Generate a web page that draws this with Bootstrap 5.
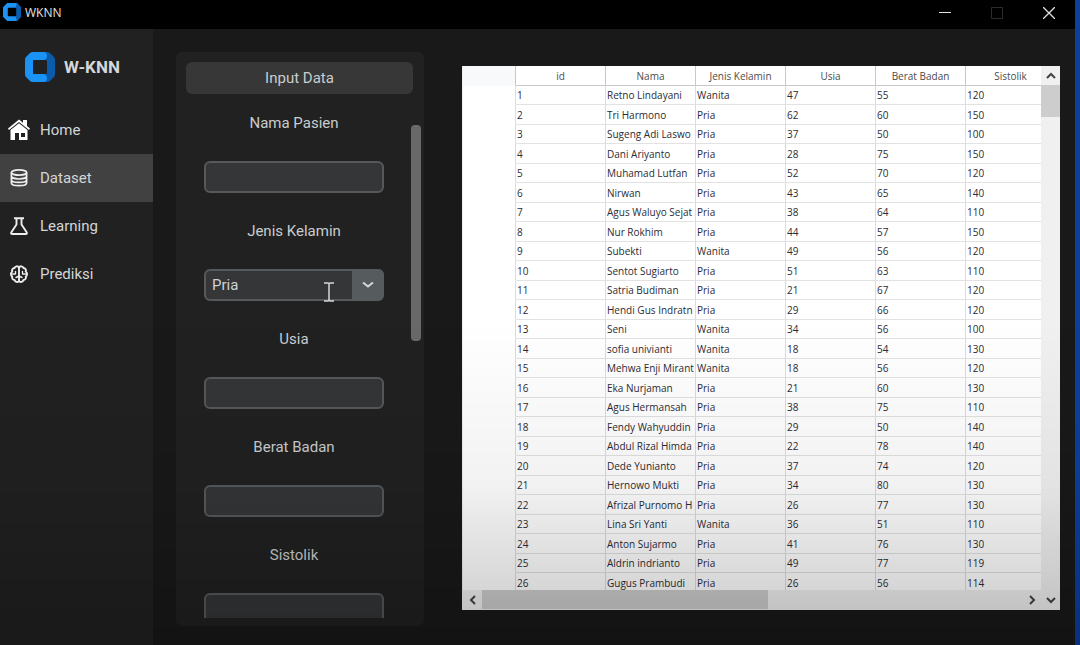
<!DOCTYPE html>
<html lang="id">
<head>
<meta charset="utf-8">
<meta name="viewport" content="width=device-width, initial-scale=1">
<title>WKNN</title>
<link href="https://cdn.jsdelivr.net/npm/bootstrap@5.3.0/dist/css/bootstrap.min.css" rel="stylesheet">
<style>
  body { font-family: Roboto, "Liberation Sans", sans-serif; font-size: 15px; line-height: 20px; color: #c9ccce; background: #191919; border-right: 5px solid #0b409c; }
  .shade { position: fixed; inset: 0; z-index: 10; pointer-events: none; background: linear-gradient(rgba(0,0,0,0) 50%, rgba(0,0,0,.05) 75%, rgba(0,0,0,.22) 100%); }
  .titlebar { height: 29px; background: #000; }
  .titlebar svg.mark-small { margin: 3px 4px 0 3px; }
  .titlebar h1 { margin-top: 5px; font: 12px/16px "Open Sans", sans-serif; color: #e4e4e4; }
  .winbtn { width: 52px; height: 24px; background: none; color: #e0e0e0; }
  .winbtn:disabled { color: #2c2c2c; }
  .sidebar { width: 153px; background: #212121; }
  .brand { height: 77px; padding-left: 25px; padding-bottom: 2px; gap: 9px; font-size: 17px; font-weight: 700; color: #d5d8da; }
  .navitem { height: 48px; padding-left: 8px; gap: 10px; color: #d3d6d8; text-decoration: none; }
  .navitem.current { background: #414141; }
  .formcard { width: 248px; margin: 23px 0 19px 23px; padding: 10px 3px 8px 10px; background: #212121; border-radius: 6px; }
  .formhead { height: 32px; line-height: 32px; margin-right: 8px; margin-bottom: 13px; background: #373737; border-radius: 6px; font-size: 15px; font-weight: 400; }
  .fields { height: 0; gap: 9px; }
  .group { width: 180px; height: 108px; }
  .group label { height: 32px; line-height: 32px; margin-bottom: 22px; }
  .entry { width: 180px; height: 32px; padding: 0 6px; color: #cfd2d4; background: #343638; border: 2px solid #55595c; border-radius: 6px; font-size: 15px; appearance: none; outline: 0; }
  .droparrow { right: 0; top: 0; width: 32px; height: 32px; background: #565b5e; border-radius: 0 6px 6px 0; pointer-events: none; }
  .ibeam { right: 48px; top: 12px; pointer-events: none; }
  .formthumb { width: 10px; height: 216px; margin-top: 18px; background: #696969; border-radius: 4px; }
  .sheet { margin: 37px 15px 35px 38px; background: #fff; border: 1px solid #eee; border-width: 0 0 1px 1px; }
  .gridview { height: 0; }
  .grid { table-layout: fixed; width: 593px; font: 10px/12px "Open Sans", sans-serif; color: #2c2c34; border-collapse: separate; border-spacing: 0; }
  .grid th, .grid td { padding: 0 1px; height: 20px; overflow: hidden; white-space: nowrap; border-right: 1px solid #dcdcdc; border-bottom: 1px solid #e2e2e2; font-weight: 400; }
  .grid tbody tr:nth-child(odd) td { height: 19px; }
  .grid thead th { color: #4c4c4c; text-align: center; border-color: #c8c8c8; }
  .grid .stub { border-bottom-color: transparent; }
  .grid thead .stub { background: #f8f9fa; }
  .bar { background: #f0f0f0; }
  .bar button { width: 19px; height: 19px; background: none; color: #444; }
  .vthumb { height: 32px; background: #cdcdcd; }
  .hthumb { width: 53%; background: #cdcdcd; }
</style>
</head>
<body class="min-vh-100 d-flex flex-column overflow-hidden">
<header class="titlebar d-flex align-items-start">
  <svg class="mark-small" width="18" height="18" viewBox="0 0 30 30"><path d="M7 0H23L30 7V23L23 30H7L0 23V7Z" fill="#1a93f5"/><path d="M23 0L30 7V23L23 30L21 22V8Z" fill="#0a5cab"/><rect x="8" y="8" width="14" height="14" rx="1" fill="#000"/></svg>
  <h1 class="mb-0">WKNN</h1>
  <div class="ms-auto d-flex">
    <button class="winbtn border-0 p-0" aria-label="Minimize"><svg width="12" height="12"><path d="M0 5.500H12" stroke="currentColor"/></svg></button>
    <button class="winbtn border-0 p-0" aria-label="Maximize" disabled><svg width="12" height="12"><path d="M.5 .5H11.500V11.500H.5Z" fill="none" stroke="currentColor"/></svg></button>
    <button class="winbtn border-0 p-0" aria-label="Close"><svg width="12" height="12"><path d="M0 0L12 12M12 0L0 12" stroke="currentColor" stroke-width="1.300"/></svg></button>
  </div>
</header>
<div class="d-flex flex-grow-1">
  <aside class="sidebar flex-shrink-0">
    <div class="brand d-flex align-items-center">
      <svg width="30" height="30" viewBox="0 0 30 30"><path d="M8 0H22V30H8Q6 30 5 29L1 25Q0 24 0 22V8Q0 6 1 5L5 1Q6 0 8 0Z" fill="#1a93f5"/><path d="M20 0H22Q24 0 25 1L29 5Q30 6 30 8V22Q30 24 29 25L25 29Q24 30 22 30H20Q22 29 22 26Q22 23 19 22H22V8H19Q22 7 22 4Q22 1 20 0Z" fill="#0a5cab"/><rect x="8" y="8" width="14" height="14" rx="1" fill="#212121"/></svg>
      <span>W-KNN</span>
    </div>
    <nav>
      <a class="navitem d-flex align-items-center" href="#home"><svg width="22" height="22" viewBox="0 0 22 22" fill="#fff"><path d="M0 9.500L11 .5L15 3.700V1H19V7L22 9.500L21 11L11 3L1 11Z"/><path fill-rule="evenodd" d="M2.500 11L11 4.300L19.500 11V21H11V14H7V21H2.500ZM13 14V18H17V14Z"/></svg><span>Home</span></a>
      <a class="navitem current d-flex align-items-center" href="#dataset" aria-current="page"><svg width="22" height="22" viewBox="0 0 22 22" fill="none" stroke="#eee" stroke-width="1.700"><ellipse cx="11" cy="5.500" rx="7.600" ry="2.700"/><path d="M3.400 5.500V16C3.400 17.700 6.800 18.700 11 18.700S18.600 17.700 18.600 16V5.500M3.400 9C3.400 10.700 6.800 12 11 12S18.600 10.700 18.600 9M3.400 12.700C3.400 14.300 6.800 15.400 11 15.400S18.600 14.300 18.600 12.700"/></svg><span>Dataset</span></a>
      <a class="navitem d-flex align-items-center" href="#learning"><svg width="22" height="22" viewBox="0 0 22 22" fill="none" stroke="#eee" stroke-width="1.900" stroke-linejoin="round"><path d="M6 3.200H16M8.500 3.500V9.500L3.200 17.500Q2.800 19 4.200 19H17.800Q19.200 19 18.800 17.500L13.500 9.500V3.500"/></svg><span>Learning</span></a>
      <a class="navitem d-flex align-items-center" href="#prediksi"><svg width="22" height="22" viewBox="0 0 22 22" fill="none" stroke="#eee" stroke-width="1.900" stroke-linejoin="round" stroke-linecap="round"><path d="M11 4V18.500M11 4.500C10 2.800 7 2.900 6.600 5C4.500 5 3.500 7 4.300 8.500C2.500 9.700 2.500 12.500 4.200 13.500C3.600 15.500 5 17 6.600 17C7 19.200 10 19.600 11 18M11 4.500C12 2.800 15 2.900 15.400 5C17.500 5 18.500 7 17.700 8.500C19.500 9.700 19.500 12.500 17.800 13.500C18.400 15.500 17 17 15.400 17C15 19.200 12 19.600 11 18"/><path d="M4.500 11H7.500V8.500M17.500 11H14.500V8.500M8 14.500L11 13L14 14.500" stroke-width="1.400"/></svg><span>Prediksi</span></a>
    </nav>
  </aside>
  <section class="formcard flex-shrink-0 d-flex flex-column">
    <h2 class="formhead text-center">Input Data</h2>
    <form class="fields d-flex flex-grow-1 overflow-hidden">
      <div class="flex-grow-1 d-flex flex-column align-items-center text-center">
        <div class="group flex-shrink-0"><label class="d-block" for="nama">Nama Pasien</label><input class="entry d-block" id="nama" type="text"></div>
        <div class="group flex-shrink-0"><label class="d-block" for="kelamin">Jenis Kelamin</label>
          <div class="position-relative"><select class="entry d-block" id="kelamin"><option>Pria</option><option>Wanita</option></select>
            <span class="droparrow position-absolute d-flex align-items-center justify-content-center"><svg width="12" height="8"><path d="M1 1.500L6 5.500L11 1.500" fill="none" stroke="#d5d8da" stroke-width="2"/></svg></span>
            <svg class="ibeam position-absolute" width="14" height="22"><path d="M2 2H6L7 3L8 2H12M7 3V19M2 20H6L7 19L8 20H12" fill="none" stroke="#d8d8d8" stroke-width="1.500"/></svg>
          </div></div>
        <div class="group flex-shrink-0"><label class="d-block" for="usia">Usia</label><input class="entry d-block" id="usia" type="text"></div>
        <div class="group flex-shrink-0"><label class="d-block" for="berat">Berat Badan</label><input class="entry d-block" id="berat" type="text"></div>
        <div class="group flex-shrink-0"><label class="d-block" for="sistolik">Sistolik</label><input class="entry d-block" id="sistolik" type="text"></div>
      </div>
      <div class="formthumb flex-shrink-0"></div>
    </form>
  </section>
  <main class="sheet d-flex flex-grow-1 overflow-hidden">
    <div class="flex-grow-1 d-flex flex-column overflow-hidden">
      <div class="gridview flex-grow-1 overflow-hidden">
        <table class="grid">
          <colgroup><col style="width:53px"><col span="6" style="width:90px"></colgroup>
          <thead><tr><th class="stub"></th><th scope="col">id</th><th scope="col">Nama</th><th scope="col">Jenis Kelamin</th><th scope="col">Usia</th><th scope="col">Berat Badan</th><th scope="col">Sistolik</th></tr></thead>
          <tbody id="rows"></tbody>
        </table>
      </div>
      <div class="bar d-flex">
        <button class="border-0 p-0 d-flex align-items-center justify-content-center" aria-label="Scroll left"><svg width="8" height="10"><path d="M6 1L2 5L6 9" fill="none" stroke="currentColor" stroke-width="2"/></svg></button>
        <div class="flex-grow-1"><div class="hthumb h-100"></div></div>
        <button class="border-0 p-0 d-flex align-items-center justify-content-center" aria-label="Scroll right"><svg width="8" height="10"><path d="M2 1L6 5L2 9" fill="none" stroke="currentColor" stroke-width="2"/></svg></button>
      </div>
    </div>
    <div class="bar d-flex flex-column">
      <button class="border-0 p-0 d-flex align-items-center justify-content-center" aria-label="Scroll up"><svg width="10" height="8"><path d="M1 6L5 2L9 6" fill="none" stroke="currentColor" stroke-width="2"/></svg></button>
      <div class="flex-grow-1"><div class="vthumb"></div></div>
      <button class="border-0 p-0 d-flex align-items-center justify-content-center" aria-label="Scroll down"><svg width="10" height="8"><path d="M1 2L5 6L9 2" fill="none" stroke="currentColor" stroke-width="2"/></svg></button>
    </div>
  </main>
</div>
<div class="shade"></div>
<script>
  const P = "Pria", W = "Wanita";
  const patients = [
    ["Retno Lindayani",W,47,55,120],["Tri Harmono",P,62,60,150],["Sugeng Adi Laswo",P,37,50,100],
    ["Dani Ariyanto",P,28,75,150],["Muhamad Lutfan",P,52,70,120],["Nirwan",P,43,65,140],
    ["Agus Waluyo Sejat",P,38,64,110],["Nur Rokhim",P,44,57,150],["Subekti",W,49,56,120],
    ["Sentot Sugiarto",P,51,63,110],["Satria Budiman",P,21,67,120],["Hendi Gus Indratn",P,29,66,120],
    ["Seni",W,34,56,100],["sofia univianti",W,18,54,130],["Mehwa Enji Mirant",W,18,56,120],
    ["Eka Nurjaman",P,21,60,130],["Agus Hermansah",P,38,75,110],["Fendy Wahyuddin",P,29,50,140],
    ["Abdul Rizal Himda",P,22,78,140],["Dede Yunianto",P,37,74,120],["Hernowo Mukti",P,34,80,130],
    ["Afrizal Purnomo H",P,26,77,130],["Lina Sri Yanti",W,36,51,110],["Anton Sujarmo",P,41,76,130],
    ["Aldrin indrianto",P,49,77,119],["Gugus Prambudi",P,26,56,114]
  ];
  document.getElementById("rows").innerHTML = patients.map((p, i) =>
    `<tr><td class="stub"></td><td>${i + 1}</td>${p.map(v => `<td>${v}</td>`).join("")}</tr>`).join("");
</script>
<script src="https://cdn.jsdelivr.net/npm/bootstrap@5.3.0/dist/js/bootstrap.bundle.min.js"></script>
</body>
</html>
